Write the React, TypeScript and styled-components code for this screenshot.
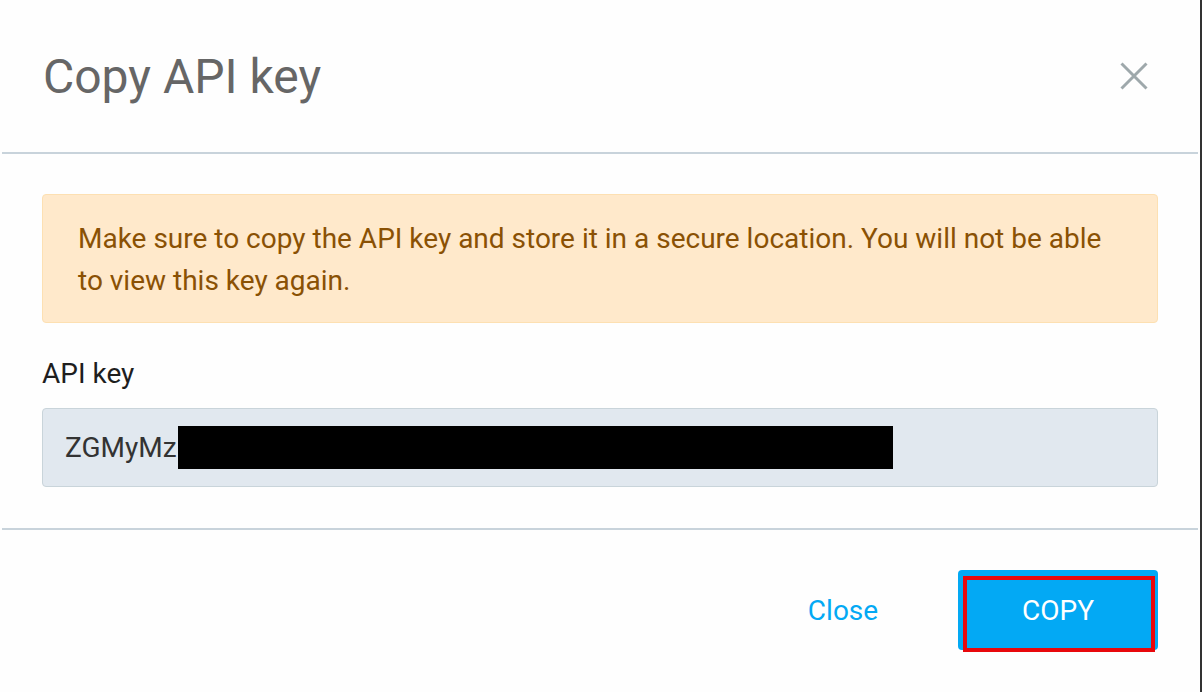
import React from "react";
import styled, { createGlobalStyle } from "styled-components";

const Global = createGlobalStyle`
  html, body {
    margin: 0;
    padding: 0;
    background: #333333;
  }
  body {
    font-family: Roboto, "Noto Sans", "Liberation Sans", sans-serif;
  }
`;

const Modal = styled.div`
  width: 1200px;
  height: 692px;
  background: #fefefe;
  display: flex;
  flex-direction: column;
  box-sizing: border-box;
`;

const Header = styled.header`
  height: 152px;
  margin: 0 2px;
  border-bottom: 2px solid #c8d3db;
  display: flex;
  align-items: center;
  justify-content: space-between;
  padding: 0 50px 0 41px;
  box-sizing: content-box;
`;

const Title = styled.h1`
  margin: 0;
  padding-top: 2px;
  font-size: 48px;
  font-weight: 400;
  color: #666666;
  line-height: 1;
`;

const CloseIcon = styled.button`
  width: 28px;
  height: 28px;
  padding: 0;
  border: 0;
  background: transparent;
  cursor: pointer;
  display: flex;
`;

const Body = styled.section`
  padding: 40px 42px 41px 42px;
  display: flex;
  flex-direction: column;
`;

const Alert = styled.div`
  background: #ffe9cb;
  border: 1px solid #fde0b2;
  border-radius: 4px;
  padding: 23px 35px 20px 35px;
  color: #8a5104;
  font-size: 28px;
  line-height: 42px;
`;

const Label = styled.label`
  display: block;
  margin-top: 37px;
  font-size: 28px;
  line-height: 28px;
  color: #1e1e1e;
`;

const KeyField = styled.div`
  margin-top: 20px;
  height: 77px;
  background: #e1e8ef;
  border: 1px solid #c9d4da;
  border-radius: 4px;
  display: flex;
  align-items: center;
  padding-left: 22px;
  font-size: 28px;
  color: #333333;
`;

const Redacted = styled.span<{ $w: number }>`
  display: inline-block;
  width: ${(p) => p.$w}px;
  height: 43px;
  background: #000;
  margin-left: 1px;
`;

const Footer = styled.footer`
  margin: 0 2px;
  border-top: 2px solid #c8d3db;
  flex: 1;
  display: flex;
  justify-content: flex-end;
  align-items: flex-start;
  padding: 40px 40px 0 0;
  gap: 41px;
`;

const TextButton = styled.button`
  width: 148px;
  height: 80px;
  border: 0;
  background: transparent;
  color: #03a9f4;
  font-family: inherit;
  font-size: 28px;
  cursor: pointer;
  padding: 0;
`;

const PrimaryButton = styled.button`
  position: relative;
  width: 200px;
  height: 80px;
  border: 0;
  border-radius: 4px;
  background: #03a9f4;
  color: #ffffff;
  font-family: inherit;
  font-size: 28px;
  cursor: pointer;
  padding: 0;
`;

const Highlight = styled.span`
  position: absolute;
  left: 5px;
  top: 6px;
  right: 3px;
  bottom: -2px;
  border: 4px solid #e8080c;
  pointer-events: none;
`;

export default function App() {
  return (
    <>
      <Global />
      <Modal>
        <Header>
          <Title>Copy API key</Title>
          <CloseIcon aria-label="Close">
            <svg width="28" height="28" viewBox="0 0 28 28">
              <path d="M1.5 1.5 L26.5 26.5 M26.5 1.5 L1.5 26.5" stroke="#9ea8ab" strokeWidth="3" fill="none" />
            </svg>
          </CloseIcon>
        </Header>
        <Body>
          <Alert>
            Make sure to copy the API key and store it in a secure location. You will not be able to view this key again.
          </Alert>
          <Label>API key</Label>
          <KeyField>
            ZGMyMz
            <Redacted $w={715} />
          </KeyField>
        </Body>
        <Footer>
          <TextButton>Close</TextButton>
          <PrimaryButton>
            COPY
            <Highlight />
          </PrimaryButton>
        </Footer>
      </Modal>
    </>
  );
}
